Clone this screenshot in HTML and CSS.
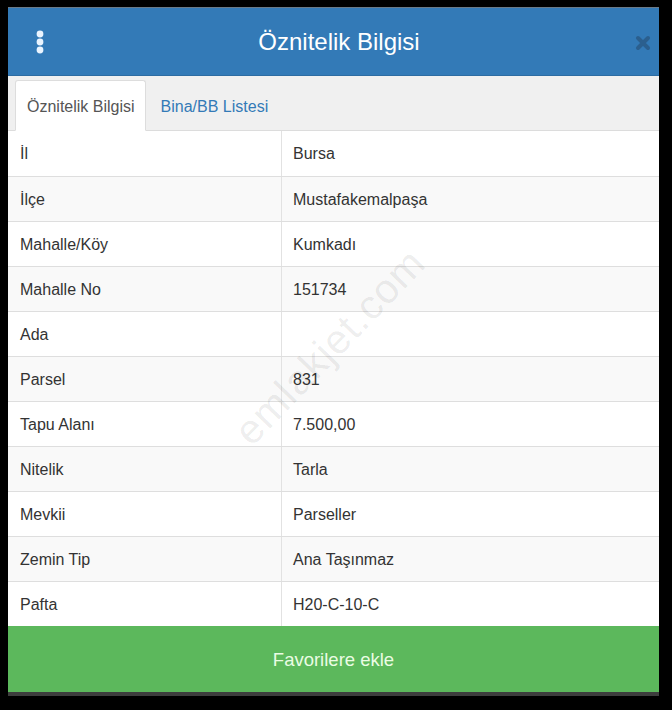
FILE: index.html
```html
<!DOCTYPE html>
<html lang="tr">
<head>
<meta charset="utf-8">
<link rel="stylesheet" href="styles.css">
</head>
<body>
<div class="panel">
  <div class="header">
    <div class="menu-icon">
      <svg width="10" height="24" viewBox="0 0 10 24"><circle cx="5" cy="4" r="3.4" fill="#eaf4ff"/><circle cx="5" cy="12" r="3.4" fill="#eaf4ff"/><circle cx="5" cy="20" r="3.4" fill="#eaf4ff"/></svg>
    </div>
    <div class="title">Öznitelik Bilgisi</div>
    <div class="close">
      <svg width="16" height="16" viewBox="0 0 16 16"><path d="M3 3 L13 13 M13 3 L3 13" stroke="#2b5f8e" stroke-width="4" stroke-linecap="round"/></svg>
    </div>
  </div>
  <div class="tabs">
    <div class="tab active">Öznitelik Bilgisi</div>
    <div class="tab">Bina/BB Listesi</div>
  </div>
  <div class="table">
    <div class="row"><div class="k">İl</div><div class="v">Bursa</div></div>
    <div class="row"><div class="k">İlçe</div><div class="v">Mustafakemalpaşa</div></div>
    <div class="row"><div class="k">Mahalle/Köy</div><div class="v">Kumkadı</div></div>
    <div class="row"><div class="k">Mahalle No</div><div class="v">151734</div></div>
    <div class="row"><div class="k">Ada</div><div class="v"></div></div>
    <div class="row"><div class="k">Parsel</div><div class="v">831</div></div>
    <div class="row"><div class="k">Tapu Alanı</div><div class="v">7.500,00</div></div>
    <div class="row"><div class="k">Nitelik</div><div class="v">Tarla</div></div>
    <div class="row"><div class="k">Mevkii</div><div class="v">Parseller</div></div>
    <div class="row"><div class="k">Zemin Tip</div><div class="v">Ana Taşınmaz</div></div>
    <div class="row"><div class="k">Pafta</div><div class="v">H20-C-10-C</div></div>
    <div class="watermark">emlakjet.com</div>
  </div>
  <div class="btn">Favorilere ekle</div>
  <div class="shadow"></div>
</div>
</body>
</html>
```
FILE: styles.css
```css
html, body {
  margin: 0;
  padding: 0;
  background: #000;
}
body {
  width: 672px;
  height: 710px;
  overflow: hidden;
  font-family: "Liberation Sans", Arial, sans-serif;
}
.panel {
  margin: 7px 0 0 8px;
  width: 651px;
  border-top: 1px solid #6a7a88;
}
.header {
  height: 68px;
  background: #337ab7;
  border-bottom: 1px solid #2d6ca2;
  box-sizing: border-box;
  display: flex;
  align-items: center;
  padding: 0 8px 0 27px;
}
.menu-icon {
  width: 10px;
  height: 24px;
  display: flex;
}
.title {
  flex: 1;
  text-align: center;
  color: #fff;
  font-size: 24px;
  padding-right: 2px;
}
.close {
  width: 16px;
  height: 16px;
  display: flex;
  margin-top: 2px;
}
.tabs {
  background: #f0f0f0;
  height: 55px;
  box-sizing: border-box;
  padding: 5px 0 0 7px;
  border-bottom: 1px solid #dcdcdc;
  display: flex;
  align-items: flex-end;
}
.tab {
  height: 50px;
  box-sizing: border-box;
  display: flex;
  align-items: center;
  font-size: 16px;
  color: #337ab7;
  margin-bottom: -1px;
  padding: 2px 12px 0 15px;
}
.tab.active {
  background: #fff;
  color: #555;
  border: 1px solid #ddd;
  border-bottom-color: #fff;
  border-radius: 3px 3px 0 0;
  padding: 2px 10px 0 11px;
  height: 51px;
}
.table {
  position: relative;
  background: #fff;
  overflow: hidden;
}
.row {
  display: grid;
  grid-template-columns: 274px 1fr;
  height: 45px;
  border-top: 1px solid #dedede;
  box-sizing: border-box;
  font-size: 16px;
  color: #333;
}
.row:first-child {
  border-top: none;
}
.row:nth-child(even) {
  background: #f9f9f9;
}
.k, .v {
  display: flex;
  align-items: center;
  padding-top: 1px;
}
.k {
  padding-left: 12px;
  border-right: 1px solid #e2e2e2;
}
.v {
  padding-left: 11px;
}
.watermark {
  position: absolute;
  left: 322px;
  top: 216px;
  transform: translate(-50%, -50%) rotate(-46deg);
  font-size: 41px;
  color: rgba(0, 0, 0, 0.08);
  letter-spacing: 1px;
  white-space: nowrap;
  pointer-events: none;
}
.btn {
  height: 66px;
  background: #5cb85c;
  color: #eafce4;
  font-size: 18.5px;
  display: flex;
  align-items: center;
  justify-content: center;
  padding-top: 1px;
  box-sizing: border-box;
}
.shadow {
  height: 4px;
  background: #3d3d3d;
}
```
